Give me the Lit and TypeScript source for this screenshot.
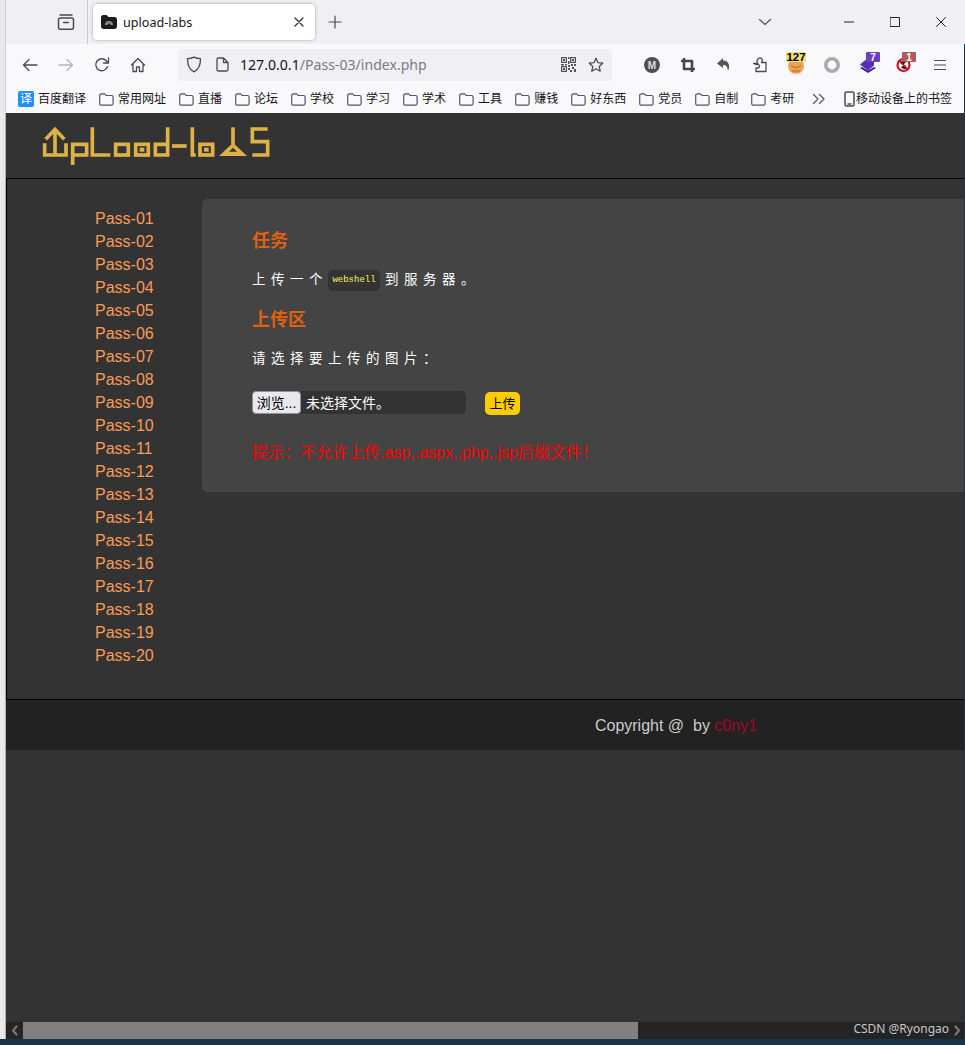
import { LitElement, html, css, svg } from "lit";
import { customElement } from "lit/decorators.js";

const ic = (w: number, h: number, body: unknown) => html`<svg width=${w} height=${h} viewBox="0 0 ${w} ${h}" fill="none" stroke="#4a4a55" stroke-width="1.5" stroke-linecap="round" stroke-linejoin="round">${body}</svg>`;

const folder = html`<svg class="fd" width="15" height="13" viewBox="0 0 15 13" fill="none" stroke="#54545e" stroke-width="1.2"><path d="M.7 2.6Q.7.8 2.5.8h3l1.6 1.7h5.4q1.6 0 1.6 1.7v6.2q0 1.8-1.8 1.8h-9.800q-1.800 0-1.800-1.800z"/></svg>`;

const bookmarks = ["常用网址", "直播", "论坛", "学校", "学习", "学术", "工具", "赚钱", "好东西", "党员", "自制", "考研"];
const passes = Array.from({ length: 20 }, (_, i) => `Pass-${String(i + 1).padStart(2, "0")}`);

@customElement("app-root")
export class AppRoot extends LitElement {
  static styles = css`
    :host { display: block; width: 965px; height: 1045px; overflow: hidden; font-family: "Noto Sans", "Noto Sans CJK SC", sans-serif; background: #f0f0f4; position: relative; }
    :host::before { content: ""; position: absolute; left: 0; top: 0; width: 5px; height: 113px; background: #e9e9ec; border-right: 1px solid #cfcfd3; z-index: 2; }
    :host::after { content: ""; position: absolute; right: 0; top: 44px; width: 1px; height: 1001px; background: #1b3347; z-index: 2; }
    svg { display: block; flex: none; }
    .tabbar { height: 44px; background: #f0f0f4; display: flex; align-items: center; }
    .cell { width: 36px; height: 36px; display: flex; align-items: center; justify-content: center; flex: none; }
    .tabstart { width: 88px; height: 44px; display: flex; align-items: center; justify-content: flex-end; padding-right: 3px; box-sizing: border-box; border-right: 1px solid #c9c9cf; }
    .tab { margin-left: 5px; width: 222px; height: 36px; background: #fff; border-radius: 4px; box-shadow: 0 0 3px rgba(0,0,0,.35); display: flex; align-items: center; padding: 0 10px 0 8px; box-sizing: border-box; font-size: 12.6px; color: #15141a; gap: 6px; }
    .tab span { flex: 1; }
    .newtab { margin-left: 2px; }
    .winctl { margin-left: auto; display: flex; align-items: center; padding-right: 1px; }
    .chev { width: 36px; display: flex; justify-content: center; margin-right: 43px; }
    .wc { width: 46px; display: flex; justify-content: center; }
    .toolbar { height: 41px; background: #f9f9fb; display: flex; align-items: center; padding-left: 12px; box-sizing: border-box; }
    .url { margin-left: 22px; width: 434px; height: 32px; background: #f0f0f4; border-radius: 4px; display: flex; align-items: center; padding: 0 2px; box-sizing: border-box; font-size: 14.1px; color: #15141a; }
    .url .cell { width: 28px; }
    .url .text { margin-left: 4px; flex: 1; white-space: nowrap; }
    .url .dim { color: #7b7b83; }
    .exts { margin-left: 22px; display: flex; }
    .bookmarks { height: 28px; background: #f9f9fb; display: flex; align-items: center; padding: 0 13px 0 18px; box-sizing: border-box; font-size: 12px; color: #15141a; line-height: 1; white-space: nowrap; }
    .bm { display: flex; align-items: center; gap: 4px; margin-right: 13px; }
    .yi { width: 16px; height: 16px; border-radius: 2px; background: #1e90ff; color: #fff; font-size: 12px; display: flex; align-items: center; justify-content: center; }
    .more { margin-left: 5px; margin-right: 0; }
    .mobile { margin-left: auto; display: flex; align-items: center; gap: 1px; }
    .pagewrap { display: flex; height: 926px; }
    .strip { width: 6px; flex: none; background: linear-gradient(90deg, #ececec 0, #e6e6e6 80%, #8a8a8a 100%); }
    .page { flex: 1; min-width: 0; background: #333; overflow: hidden; font-family: "Liberation Sans", "Noto Sans CJK SC", sans-serif; position: relative; display: flex; flex-direction: column; }
    .head { height: 65px; flex: none; padding-left: 34px; display: flex; align-items: flex-start; padding-top: 7px; box-sizing: border-box; background: #333; }
    .main { width: 1340px; box-sizing: border-box; height: 522px; flex: none; border-top: 1px solid #000; border-bottom: 1px solid #000; border-left: 1px solid #000; display: grid; grid-template-columns: 195px 1fr; }
    .side { list-style: none; margin: 0; padding: 28px 0 0 88px; font-size: 16px; line-height: 23px; color: #fb9b56; }
    .panel { margin-top: 20px; height: 293px; background: #444; border-radius: 5px; padding: 30px 50px 0; box-sizing: border-box; color: #fff; }
    h3 { margin: 0; font-size: 18px; line-height: 24px; color: #e0600f; font-weight: 700; }
    p { margin: 0; font-size: 13.500px; line-height: 24px; letter-spacing: 5.500px; }
    .p1 { margin: 15px 0 16px; display: flex; align-items: center; height: 24px; }
    .p2 { margin: 15px 0 20px; }
    code { background: #333; color: #f4f45e; border-radius: 5px; font-family: "Liberation Mono", monospace; font-size: 9px; font-weight: 400; letter-spacing: 0; padding: 0 4px; height: 21px; line-height: 21px; width: 52px; box-sizing: border-box; display: inline-block; margin: 0 5px 0 0; text-align: center; }
    .form { display: flex; align-items: flex-start; font-size: 14px; height: 24px; }
    .browse { width: 49px; height: 23px; box-sizing: border-box; background: #e9e9ed; color: #000; border: 1px solid #8f8f9d; border-radius: 4px; font-size: 14px; line-height: 23px; text-align: center; white-space: nowrap; }
    .fname { width: 165px; height: 23px; background: #333; border-radius: 0 5px 5px 0; color: #fff; line-height: 25px; padding-left: 5px; box-sizing: border-box; }
    .go { margin: 1px 0 0 19px; width: 35px; height: 23px; background: #fc0; color: #000; border-radius: 5px; font-size: 13px; line-height: 23px; text-align: center; }
    .tip { margin-top: 26px; color: #f00; font-size: 16px; line-height: 24px; white-space: nowrap; }
    .foot { width: 1340px; height: 50px; flex: none; background: #222; color: #ccc; font-size: 16px; line-height: 52px; text-align: center; white-space: pre; overflow: hidden; }
    .foot b { font-weight: 400; color: #a0082a; }
    .fill { flex: 1; }
    .sb { height: 17px; flex: none; background: #242424; display: flex; align-items: center; }
    .sb .l { width: 17px; display: flex; justify-content: center; }
    .thumb { width: 615px; height: 17px; background: #808080; }
    .wm { position: absolute; right: 16px; bottom: 3px; color: #c8c8c8; font-size: 12px; line-height: 14px; font-family: "Noto Sans", sans-serif; }
    .arr { position: absolute; right: 4px; bottom: 3px; }
    .navy { height: 6px; background: #1b3347; }
  `;

  logo() {
    return html`<svg width="240" height="60" viewBox="120 30 720 180" fill="none" stroke="#deb246" stroke-width="11">
      ${svg`<path d="M137 88l28-30 28 30M165 58v76M134 100v35h64v-35"/>
      <path d="M218 165V103h42v32h-42"/>
      <path d="M277 52v83h54"/>
      <rect x="347" y="103" width="38" height="32"/>
      <rect x="407" y="103" width="38" height="32"/><rect x="419" y="113" width="14" height="12" fill="#deb246" stroke="none"/>
      <path d="M503 52v83h-37v-32h37"/>
      <path d="M516 108h44"/>
      <path d="M577 52v83h10"/>
      <rect x="600" y="103" width="38" height="32"/><rect x="612" y="113" width="14" height="12" fill="#deb246" stroke="none"/>
      <path d="M699 52v50"/><path fill-rule="evenodd" d="M699 98l42 40h-84zM699 113l-12 12h24z" fill="#deb246" stroke="none"/>
      <path d="M803 57h-46v38h46v40h-46"/>`}
    </svg>`;
  }

  render() {
    return html`
      <div class="tabbar">
        <div class="tabstart"><div class="cell">${ic(18, 16, svg`<path d="M3 1h12M1.500 6q0-2 2-2h11q2 0 2 2v7.500q0 1.800-2 1.800h-11q-2 0-2-1.800zM6.500 8.500h5"/>`)}</div></div>
        <div class="tab">
          <svg width="16" height="14" viewBox="0 0 16 14"><path d="M0 2.500Q0 0 2.500 0h3l2 2h6Q16 2 16 4.500V11q0 3-3 3H3q-3 0-3-3z" fill="#1c1c1e"/><path d="M4 10a4 4 0 0 1 8 0h-2.500a1.500 1.500 0 0 0-3 0z" fill="#8a8a8a"/></svg>
          <span>upload-labs</span>
          ${ic(12, 12, svg`<path d="M2 2l8 8M10 2l-8 8" stroke="#2b2a33" stroke-width="1.200"/>`)}
        </div>
        <div class="cell newtab">${ic(14, 14, svg`<path d="M7 1v12M1 7h12" stroke-width="1.200"/>`)}</div>
        <div class="winctl">
          <div class="chev">${ic(14, 8, svg`<path d="M1.500 1.500L7 6.500l5.500-5" stroke="#55555e" stroke-width="1.200"/>`)}</div>
          <div class="wc">${ic(10, 2, svg`<path d="M0 1h10" stroke="#222" stroke-width="1" stroke-linecap="butt"/>`)}</div>
          <div class="wc">${ic(10, 10, svg`<rect x=".5" y=".5" width="9" height="9" stroke="#222" stroke-width="1"/>`)}</div>
          <div class="wc">${ic(10, 10, svg`<path d="M.5.5l9 9M9.500.5l-9 9" stroke="#222" stroke-width="1"/>`)}</div>
        </div>
      </div>
      <div class="toolbar">
        <div class="cell">${ic(16, 14, svg`<path d="M7 1.500L1.500 7 7 12.500M2 7h13" stroke-width="1.300"/>`)}</div>
        <div class="cell">${ic(16, 14, svg`<path d="M9 1.500L14.500 7 9 12.500M14 7H1" stroke="#b5b5bb" stroke-width="1.300"/>`)}</div>
        <div class="cell">${ic(16, 16, svg`<path d="M13.500 9.500a6 6 0 1 1-1.500-6L14.500 6M14.500 1v5h-5" stroke-width="1.300"/>`)}</div>
        <div class="cell">${ic(16, 16, svg`<path d="M1.500 8L8 1.500 14.500 8M3 6.500V14.500h3.500V10h3v4.500H13V6.500" stroke-width="1.300"/>`)}</div>
        <div class="url">
          <div class="cell">${ic(16, 17, svg`<path d="M8 1.200c2 1 4 1.500 6.500 1.500 0 6-1 10.500-6.500 13.100C2.500 13.200 1.500 8.700 1.500 2.700 4 2.700 6 2.200 8 1.200z" stroke-width="1.300"/>`)}</div>
          <div class="cell">${ic(13, 15, svg`<path d="M1 2.500Q1 1 2.500 1h5L12 5.500v7Q12 14 10.500 14h-8Q1 14 1 12.500zM7.500 1v4.500H12" stroke-width="1.300"/>`)}</div>
          <div class="text">127.0.0.1<span class="dim">/Pass-03/index.php</span></div>
          <div class="cell"><svg width="15" height="15" viewBox="0 0 15 15" fill="#55555e"><path fill-rule="evenodd" d="M0 0h6v6H0zM1.200 1.200v3.600h3.600V1.200zM9 0h6v6H9zM10.200 1.200v3.600h3.600V1.200zM0 9h6v6H0zM1.200 10.200v3.600h3.600v-3.600z"/><path d="M2 2h2v2H2zM11 2h2v2h-2zM2 11h2v2H2zM7 0h1.500v2H7zM7 4h1.500v3H7zM0 7h3v1.500H0zM4 7h2v1.500H4zM7 8h2v2H7zM10 7h2v2h-2zM13 7h2v2h-2zM7 11h2v2H7zM11 10h2v2h-2zM9 13h2v2H9zM13 12h2v3h-2z"/></svg></div>
          <div class="cell">${ic(16, 16, svg`<path d="M8 1.200l2 4.500 4.800.5-3.600 3.200 1 4.800L8 11.800l-4.200 2.400 1-4.800L1.200 6.200 6 5.700z" stroke-width="1.300"/>`)}</div>
        </div>
        <div class="exts">
          <div class="cell"><svg width="16" height="16" viewBox="0 0 16 16"><circle cx="8" cy="8" r="8" fill="#4f4f5a"/><text x="8" y="11.500" font-size="10" font-weight="700" text-anchor="middle" fill="#ddd" font-family="Liberation Sans">M</text></svg></div>
          <div class="cell">${ic(16, 16, svg`<path d="M4 1v11h11M1 4h11v11" stroke-width="2.600" stroke-linecap="butt" stroke="#45454f"/>`)}</div>
          <div class="cell"><svg width="16" height="15" viewBox="0 0 16 15"><path d="M7 1L1 6.500 7 11V8c3 0 4.500 1.500 5 6 2.500-5 1-10.500-5-10.500z" fill="#55555e"/></svg></div>
          <div class="cell">${ic(16, 17, svg`<path d="M1.500 7.500h4.300Q4 5 6 3t3.500-.5Q11 4.500 9.500 6.500H14v9H4v-3.500h1.500q2 0 2-1.800t-2-1.700H4z" stroke-width="1.300"/>`)}</div>
          <div class="cell"><svg width="20" height="25" viewBox="0 0 20 25"><circle cx="10" cy="14" r="8" fill="#eda452"/><path d="M5 14l6 2 4-3M6 19h8" stroke="#b9662a" fill="none"/><rect y="0" width="20" height="10" fill="#efe080"/><text x="10" y="9" font-size="11.500" font-weight="700" text-anchor="middle" fill="#000" font-family="Liberation Sans">127</text></svg></div>
          <div class="cell"><svg width="16" height="16" viewBox="0 0 16 16"><circle cx="8" cy="8" r="6.200" fill="none" stroke="#aaa" stroke-width="3.600"/></svg></div>
          <div class="cell"><svg width="26" height="26" viewBox="0 0 26 26"><path d="M5 16l2-1 6 3.500 6-3.500 2 1-8 5z" fill="#3a1fa0"/><path d="M5 12.500l6-5h8v6l-6 5z" fill="#5a2db8"/><rect x="11" y="0" width="14" height="10" rx="1" fill="#6b3fc4"/><text x="18" y="9" font-size="10" font-weight="700" text-anchor="middle" fill="#fff" font-family="Liberation Sans">7</text></svg></div>
          <div class="cell"><svg width="26" height="26" viewBox="0 0 26 26"><circle cx="12.500" cy="13" r="6" fill="#fff" stroke="#cc1020" stroke-width="2.200"/><path d="M9 11a4 4 0 0 1 6-1l-3 3zM10 15a4 4 0 0 0 6 1l-2-3z" fill="#111"/><path d="M8.500 8.500l8 9" stroke="#cc1020" stroke-width="1.800"/><rect x="11" y="0" width="14" height="10" rx="1" fill="#b05a5f"/><text x="18" y="9" font-size="10" font-weight="700" text-anchor="middle" fill="#fff" font-family="Liberation Sans">1</text></svg></div>
          <div class="cell">${ic(14, 12, svg`<path d="M1 1.500h12M1 6h12M1 10.500h12" stroke-linecap="butt" stroke-width="1.200"/>`)}</div>
        </div>
      </div>
      <div class="bookmarks">
        <div class="bm"><div class="yi">译</div>百度翻译</div>
        ${bookmarks.map((b) => html`<div class="bm">${folder}${b}</div>`)}
        <div class="bm more">${ic(14, 12, svg`<path d="M1.500 1.500L6 6l-4.500 4.500M7.500 1.500L12 6l-4.500 4.500" stroke-width="1.200" stroke="#55555e"/>`)}</div>
        <div class="mobile">${ic(11, 16, svg`<rect x="1" y="1" width="9" height="14" rx="1.500" stroke="#4a4a55"/><path d="M4 13h3" />`)}移动设备上的书签</div>
      </div>
      <div class="pagewrap">
        <div class="strip"></div>
        <div class="page">
          <div class="head">${this.logo()}</div>
          <div class="main">
            <ul class="side">${passes.map((p) => html`<li>${p}</li>`)}</ul>
            <div class="panel">
              <h3>任务</h3>
              <p class="p1">上传一个<code>webshell</code>到服务器。</p>
              <h3>上传区</h3>
              <p class="p2">请选择要上传的图片：</p>
              <div class="form">
                <div class="browse">浏览...</div>
                <div class="fname">未选择文件。</div>
                <div class="go">上传</div>
              </div>
              <div class="tip">提示：不允许上传.asp,.aspx,.php,.jsp后缀文件！</div>
            </div>
          </div>
          <div class="foot">Copyright @  by <b>c0ny1</b></div>
          <div class="fill"></div>
          <div class="sb">
            <div class="l">${ic(7, 11, svg`<path d="M5.500 1.500L2 5.500l3.500 4" stroke="#777" stroke-width="2.200"/>`)}</div>
            <div class="thumb"></div>
          </div>
          <div class="wm">CSDN @Ryongao</div>
          <div class="arr">${ic(7, 11, svg`<path d="M1.500 1.500L5 5.500l-3.500 4" stroke="#777" stroke-width="2.200"/>`)}</div>
        </div>
      </div>
      <div class="navy"></div>
    `;
  }
}
